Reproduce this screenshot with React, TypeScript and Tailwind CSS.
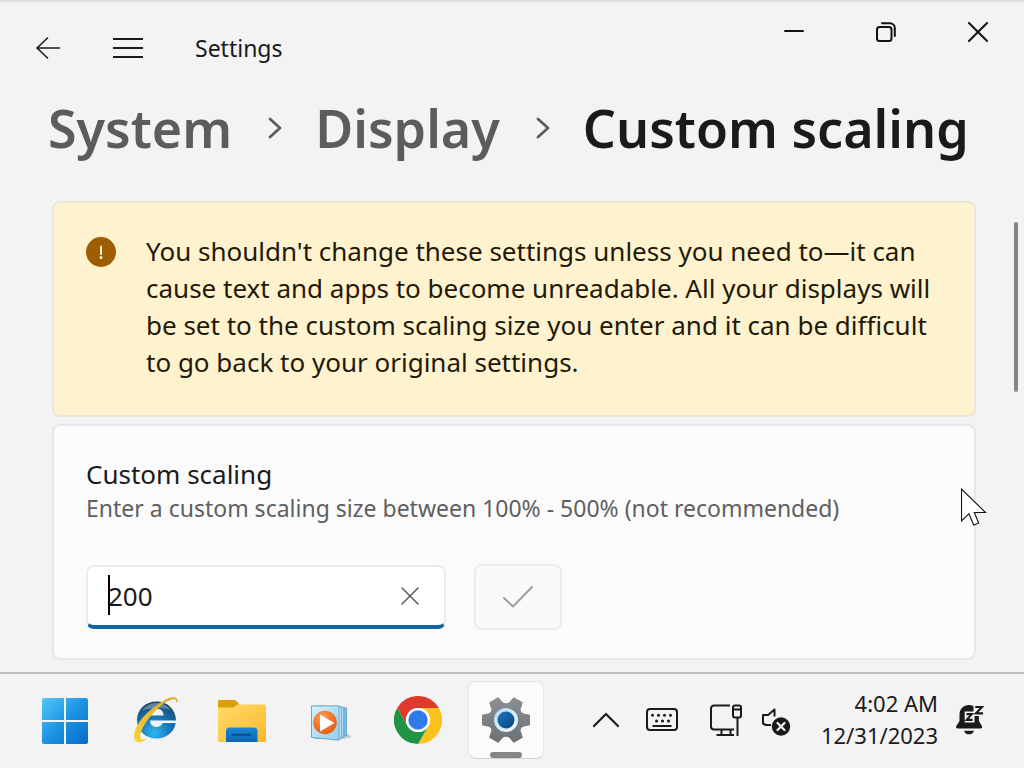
import React, { useState } from "react";

const crumbs = [
  { name: "System", path: "#system" },
  { name: "Display", path: "#display" },
];

const BackIcon = () => (
  <svg width="26" height="24" viewBox="0 0 26 24" fill="none" stroke="#1b1b1b" strokeWidth="1.6" strokeLinecap="round" strokeLinejoin="round">
    <path d="M12.5 2 2 12l10.5 10M2.5 12h22" />
  </svg>
);

const MenuIcon = () => (
  <svg width="30" height="22" viewBox="0 0 30 22" stroke="#1b1b1b" strokeWidth="2">
    <path d="M0 2h30M0 11h30M0 20h30" />
  </svg>
);

const MinimizeIcon = () => (
  <svg width="20" height="20" viewBox="0 0 20 20" stroke="#111" strokeWidth="2" strokeLinecap="round">
    <path d="M1 9h18" />
  </svg>
);

const RestoreIcon = () => (
  <svg width="20" height="20" viewBox="0 0 20 20" fill="none" stroke="#111" strokeWidth="2" strokeLinecap="round">
    <rect x="1" y="5" width="14.5" height="14" rx="2.5" />
    <path d="M6 1.200h8a4.800 4.800 0 0 1 4.800 4.800v8" />
  </svg>
);

const CloseIcon = () => (
  <svg width="20" height="20" viewBox="0 0 20 20" stroke="#111" strokeWidth="2" strokeLinecap="round">
    <path d="m1 1 18 18M19 1 1 19" />
  </svg>
);

const CrumbIcon = () => (
  <svg width="14" height="22" viewBox="0 0 14 22" fill="none" stroke="#5c5c5c" strokeWidth="2.8" strokeLinecap="round" strokeLinejoin="round">
    <path d="m2 2 10 9L2 20" />
  </svg>
);

const WarningIcon = () => (
  <svg width="30" height="30" viewBox="0 0 30 30" className="shrink-0">
    <circle cx="15" cy="15" r="15" fill="#9d5d00" />
    <path d="M15 9.5v7.5" stroke="#fff4ce" strokeWidth="2" strokeLinecap="round" />
    <circle cx="15" cy="20.6" r="1.5" fill="#fff4ce" />
  </svg>
);

const StartIcon = () => (
  <svg width="48" height="48" viewBox="0 0 48 48">
    <defs>
      <linearGradient id="start" x1="0" y1="0" x2="1" y2="1" gradientUnits="objectBoundingBox">
        <stop offset="0" stopColor="#52c8fb" />
        <stop offset="0.5" stopColor="#1c93e2" />
        <stop offset="1" stopColor="#066bcb" />
      </linearGradient>
    </defs>
    <path
      fill="url(#start)"
      d="M2 1h20v22H0V3a2 2 0 0 1 2-2zM24 1h20a2 2 0 0 1 2 2v20H24zM0 25h22v22H2a2 2 0 0 1-2-2zM24 25h22v20a2 2 0 0 1-2 2H24z"
      transform="translate(0 1)"
    />
  </svg>
);

const ExplorerBrowserIcon = () => (
  <svg width="48" height="48" viewBox="0 0 48 48">
    <defs>
      <radialGradient id="ie" cx="0.45" cy="0.85" r="0.85">
        <stop offset="0" stopColor="#2fb4f2" />
        <stop offset="0.5" stopColor="#1577b8" />
        <stop offset="1" stopColor="#1b4468" />
      </radialGradient>
      <linearGradient id="ring" x1="1" y1="0" x2="0" y2="1">
        <stop offset="0" stopColor="#d9a92c" />
        <stop offset="0.5" stopColor="#e8b92e" />
        <stop offset="1" stopColor="#f6d33c" />
      </linearGradient>
    </defs>
    <path
      fill="url(#ie)"
      fillRule="evenodd"
      d="M26.500 5.500c11 0 19.500 8 19.500 19H20c.3 4.200 2.800 6.500 6.300 6.500 3.200 0 5.200-1.500 6.200-4h13.200C44 36.500 36.500 42.500 26.500 42.500 15.500 42.500 7 34.500 7 24S15.500 5.500 26.500 5.500zM19.500 19.500h14.200c-.3-4.300-2.800-6.800-6.700-6.800s-6.700 2.500-7.500 6.800z"
    />
    <path d="M12 14.500c4-5 9-7.500 14.500-7.500 6 0 11 2.500 14 7-6-2.500-17-3-28.500.5z" fill="#fff" opacity="0.3" />
    <path
      fill="url(#ring)"
      d="M47.500 6C48.500 1 42.500-.5 35 4 22 10.500 9 23 5 34.500c-2.500 8 0 13 6 11.500 2.500-.7 4.500-2 6-3.500-5 2.300-7.500 1-6.500-4.500C12.500 29 24 14 35 6.500c7-4.200 12-4.500 11-.5z"
    />
  </svg>
);

const FolderIcon = () => (
  <svg width="48" height="48" viewBox="0 0 48 48">
    <defs>
      <linearGradient id="folder" x1="0" y1="0" x2="1" y2="1">
        <stop offset="0" stopColor="#ffdb6a" />
        <stop offset="1" stopColor="#fbb92c" />
      </linearGradient>
      <linearGradient id="tray" x1="0" y1="0" x2="0" y2="1">
        <stop offset="0" stopColor="#1788d8" />
        <stop offset="1" stopColor="#0f66ad" />
      </linearGradient>
    </defs>
    <path d="M1.500 4H16c1 0 1.600.3 2.200.9L22 9l-5 7H0V5.500C0 4.600.6 4 1.500 4z" fill="#d89e0c" />
    <path d="M0 11.500h14c1.200 0 2-.3 2.800-1l1-.9c.8-.8 1.800-1.100 3-1.100h25.700c.9 0 1.500.6 1.500 1.500v34.500c0 .9-.6 1.500-1.500 1.500h-45C.6 46 0 45.400 0 44.500z" fill="url(#folder)" />
    <path d="M8 46V35a3.500 3.500 0 0 1 3.500-3.500h24.500a3.500 3.500 0 0 1 3.500 3.500v11z" fill="url(#tray)" />
    <path d="M14.500 38.800h18" stroke="#0b4c87" strokeWidth="2" strokeLinecap="round" />
  </svg>
);

const MediaPlayerIcon = () => (
  <svg width="48" height="48" viewBox="0 0 48 48">
    <defs>
      <radialGradient id="disc" cx="0.4" cy="0.3" r="0.8">
        <stop offset="0" stopColor="#f9a258" />
        <stop offset="0.6" stopColor="#ee6f22" />
        <stop offset="1" stopColor="#dd5a12" />
      </radialGradient>
      <linearGradient id="sheet" x1="0" y1="0" x2="1" y2="1">
        <stop offset="0" stopColor="#d8f1fc" />
        <stop offset="1" stopColor="#93cdec" />
      </linearGradient>
    </defs>
    <path d="M30 44.500 45.500 41 42 38z" fill="#b5cbd8" />
    <path d="m12 11 28.500 1v27.500L12 42z" fill="#7fbfe4" stroke="#4f94bd" strokeWidth="0.7" />
    <path d="m10 10.500 27.800.8v30L10 42z" fill="#a9dbf3" stroke="#4f94bd" strokeWidth="0.7" />
    <path d="m8 10 27.300.6v32L8 42z" fill="#c5e8f8" stroke="#4f94bd" strokeWidth="0.7" />
    <path d="m5.500 10 27.500-.2v34.400L5.500 41.500z" fill="url(#sheet)" stroke="#5ba0c8" strokeWidth="0.9" />
    <circle cx="19" cy="26.500" r="11.800" fill="url(#disc)" />
    <path d="M14 18.500v17L28.300 27z" fill="#fff" />
  </svg>
);

const ChromeIcon = () => (
  <svg width="48" height="48" viewBox="0 0 48 48">
    <path d="M3.200 12A24 24 0 0 1 44.800 12H24A12 12 0 0 0 13.600 30z" fill="#df3a2e" />
    <path d="M44.800 12A24 24 0 0 1 24 48L34.400 30A12 12 0 0 0 24 12z" fill="#fcc31e" />
    <path d="M24 48A24 24 0 0 1 3.200 12L13.600 30A12 12 0 0 0 34.400 30z" fill="#219347" />
    <circle cx="24" cy="24" r="12" fill="#fff" />
    <circle cx="24" cy="24" r="9.700" fill="#2f79ea" />
  </svg>
);

const GearIcon = () => (
  <svg width="48" height="48" viewBox="0 0 48 48">
    <defs>
      <linearGradient id="gear" x1="0" y1="0" x2="0" y2="48" gradientUnits="userSpaceOnUse">
        <stop offset="0" stopColor="#8b9094" />
        <stop offset="1" stopColor="#6b7074" />
      </linearGradient>
      <linearGradient id="hub" x1="0" y1="0" x2="1" y2="1">
        <stop offset="0" stopColor="#1a76c2" />
        <stop offset="1" stopColor="#0b4379" />
      </linearGradient>
      <linearGradient id="rim" x1="0" y1="0" x2="1" y2="1">
        <stop offset="0" stopColor="#b9d9ee" />
        <stop offset="1" stopColor="#f2f9fe" />
      </linearGradient>
    </defs>
    <path
      fill="url(#gear)"
      stroke="url(#gear)"
      strokeWidth="2"
      strokeLinejoin="round"
      d="M47 19.500v9l-5.500 1c-3 .8-4.500 3.500-3.600 6.300l1.800 5.300-7.800 4.500-3.700-4.200c-2.300-2.200-6.100-2.200-8.400 0l-3.700 4.200-7.800-4.500 1.800-5.300c.9-2.800-.6-5.500-3.600-6.300l-5.500-1v-9l5.500-1c3-.8 4.500-3.500 3.600-6.300L8.300 6.900l7.800-4.500 3.700 4.200c2.300 2.200 6.100 2.200 8.400 0l3.700-4.200 7.800 4.500-1.800 5.300c-.9 2.800.6 5.500 3.600 6.300z"
    />
    <circle cx="24" cy="24" r="12" fill="url(#rim)" />
    <circle cx="24" cy="24" r="8.500" fill="url(#hub)" />
  </svg>
);

const ChevronUpIcon = () => (
  <svg width="28" height="16" viewBox="0 0 28 16" fill="none" stroke="#1a1a1a" strokeWidth="2.200" strokeLinecap="round" strokeLinejoin="round">
    <path d="m2 14 12-12 12 12" />
  </svg>
);

const KeyboardIcon = () => (
  <svg width="32" height="24" viewBox="0 0 32 24" fill="none" stroke="#1a1a1a">
    <rect x="1" y="1" width="30" height="21" rx="3" strokeWidth="2" />
    <path d="M6.500 7.300h.01M12.500 7.300h.01M18.500 7.300h.01M24.500 7.300h.01M10.500 13h.01M16.500 13h.01M22.500 13h.01" strokeWidth="3" strokeLinecap="round" />
    <path d="M6.500 18h19" strokeWidth="2" />
  </svg>
);

const NetworkIcon = () => (
  <svg width="32" height="32" viewBox="0 0 32 32" fill="none" stroke="#1a1a1a" strokeWidth="2">
    <path d="M20 1.500H4a3 3 0 0 0-3 3v18a3 3 0 0 0 3 3h20M11.500 25.500V31M20.500 25.500V31M6.500 31h17.500M27.500 14v18" />
    <rect x="23" y="1.500" width="8" height="12" rx="2" />
    <path d="M23 5.500h8" />
  </svg>
);

const VolumeMutedIcon = () => (
  <svg width="29" height="32" viewBox="0 0 29 32" fill="none" stroke="#1a1a1a" strokeWidth="2" strokeLinejoin="round">
    <path d="M9 21H4l-3-1.500V11h5l6.500-5.500v7" />
    <circle cx="19" cy="22.500" r="9.200" fill="#1a1a1a" stroke="none" />
    <path d="m15.500 19 7 7M22.500 19l-7 7" stroke="#f3f3f3" strokeWidth="2.200" strokeLinecap="round" />
  </svg>
);

const SnoozeIcon = () => (
  <svg width="28" height="32" viewBox="0 0 28 32">
    <path d="M13 1C7.500 1 3.500 5 3.500 10.500V17L.3 22c-.7 1.300 0 2.400 1.400 2.400h22.800c1.400 0 2.100-1.100 1.400-2.400l-3-5v-6.500C22.900 5 18.500 1 13 1z" fill="#1a1a1a" />
    <path d="M8 26.700h10c-.7 2.500-2.600 3.600-5 3.600s-4.300-1.100-5-3.600z" fill="#1a1a1a" />
    <path d="M17.500 0H28v12h-9.500v6.500H8.700V7.500h8.800z" fill="#f3f3f3" />
    <path d="M19.300 3h6.700L20 9.300h7" fill="none" stroke="#1a1a1a" strokeWidth="2.200" />
    <path d="M10.500 10.200h5.200l-4.900 5.600h5.700" fill="none" stroke="#1a1a1a" strokeWidth="2.200" />
  </svg>
);

const PointerIcon = () => (
  <svg width="26" height="38" viewBox="0 0 26 38">
    <path d="M.5 1v32l7.500-7.300 4.700 11.300 5-2-4.400-10.500h11.200z" fill="#fff" stroke="#111" strokeWidth="1.100" />
  </svg>
);

const pinnedApps = [
  { name: "Start", icon: StartIcon },
  { name: "Internet Explorer", icon: ExplorerBrowserIcon },
  { name: "File Explorer", icon: FolderIcon },
  { name: "Media Player", icon: MediaPlayerIcon },
  { name: "Google Chrome", icon: ChromeIcon },
  { name: "Settings", icon: GearIcon, active: true },
];

const windowControls = [
  { name: "Minimize", icon: MinimizeIcon },
  { name: "Restore", icon: RestoreIcon },
  { name: "Close", icon: CloseIcon },
];

const TitleBar: React.FC = () => (
  <header className="flex items-start justify-between">
    <div className="flex items-center pt-[30px] pl-[35px]">
      <button aria-label="Back" className="flex h-8 w-[78px] items-center">
        <BackIcon />
      </button>
      <button aria-label="Open navigation" className="flex h-8 w-[82px] items-center">
        <MenuIcon />
      </button>
      <span className="text-[23px] leading-8">Settings</span>
    </div>
    <div className="flex">
      {windowControls.map(({ name, icon: Icon }) => (
        <button key={name} aria-label={name} className="flex h-[60px] w-[92px] items-center justify-center">
          <Icon />
        </button>
      ))}
    </div>
  </header>
);

const Breadcrumb: React.FC = () => (
  <nav aria-label="Breadcrumb" className="pt-6 pl-12">
    <ol className="flex items-center text-[52px] leading-[80px] font-semibold whitespace-nowrap">
      {crumbs.map((crumb) => (
        <li key={crumb.name} className="flex items-center">
          <a href={crumb.path} className="text-[#5c5c5c]">
            {crumb.name}
          </a>
          <span className="pr-[33px] pl-9">
            <CrumbIcon />
          </span>
        </li>
      ))}
      <li>
        <h1 className="text-[#1a1a1a]">Custom scaling</h1>
      </li>
    </ol>
  </nav>
);

const ScalingCard: React.FC = () => {
  const [value, setValue] = useState("200");

  return (
    <section className="rounded-lg border-2 border-[#e7e7e7] bg-[#fbfbfb] px-8 pt-[30px] pb-7">
      <label htmlFor="scaling" className="block text-[26px] leading-9">
        Custom scaling
      </label>
      <p className="text-[23px] leading-8 text-[#5f5f5f]">
        Enter a custom scaling size between 100% - 500% (not recommended)
      </p>
      <div className="flex items-center gap-7 pt-10">
        <div className="relative flex h-16 w-[360px] items-center overflow-hidden rounded-lg border-2 border-[#ececec] border-b-4 border-b-[#0f67a8] bg-white">
          <input
            id="scaling"
            type="text"
            value={value}
            onChange={(e) => setValue(e.target.value)}
            className="h-full min-w-0 flex-1 bg-transparent pl-5 text-[26px] caret-transparent outline-none"
          />
          <span className="absolute top-2 left-5 h-10 w-0.5 bg-black" />
          <button aria-label="Clear" onClick={() => setValue("")} className="flex h-full w-[68px] items-center justify-center">
            <svg width="18" height="18" viewBox="0 0 18 18" stroke="#5a5a5a" strokeWidth="1.500" strokeLinecap="round">
              <path d="m1 1 16 16M17 1 1 17" />
            </svg>
          </button>
        </div>
        <button aria-label="Apply" className="flex h-[66px] w-[88px] items-center justify-center rounded-lg border-2 border-[#ececec] bg-[#fafafa]">
          <svg width="30" height="24" viewBox="0 0 30 24" fill="none" stroke="#9d9d9d" strokeWidth="2" strokeLinecap="round" strokeLinejoin="round">
            <path d="m1 13 9 8.500L29 2" />
          </svg>
        </button>
      </div>
    </section>
  );
};

const Taskbar: React.FC = () => (
  <footer className="flex h-24 items-center justify-between border-t-2 border-[#bfbfbf] bg-[#f3f3f3] pr-10 pb-0.5 pl-7">
    <div className="flex gap-3">
      {pinnedApps.map(({ name, icon: Icon, active }) => (
        <button
          key={name}
          aria-label={name}
          className={`relative flex h-[78px] w-[76px] items-center justify-center rounded-lg border ${
            active ? "border-[#e6e6e6] border-b-[#d2d2d2] bg-[#fbfbfb]" : "border-transparent"
          }`}
        >
          <Icon />
          {active && <span className="absolute bottom-0 left-[21px] h-1.5 w-8 rounded-full bg-[#868686]" />}
        </button>
      ))}
    </div>
    <div className="flex items-center">
      <button aria-label="Show hidden icons" className="mr-[26px]">
        <ChevronUpIcon />
      </button>
      <button aria-label="Touch keyboard" className="mr-8">
        <KeyboardIcon />
      </button>
      <button aria-label="Network and volume" className="mr-[30px] flex items-center gap-5">
        <NetworkIcon />
        <VolumeMutedIcon />
      </button>
      <button className="mr-[18px] pb-0.5 text-right text-[22px] leading-8">
        <time className="block">4:02 AM</time>
        <time className="block">12/31/2023</time>
      </button>
      <button aria-label="Notifications snoozed">
        <SnoozeIcon />
      </button>
    </div>
  </footer>
);

const App: React.FC = () => {
  return (
    <div className="relative flex min-h-screen flex-col overflow-hidden border-t-2 border-[#dedede] bg-[#f3f3f3] font-['Noto_Sans',sans-serif] text-[#1a1a1a]">
      <TitleBar />
      <Breadcrumb />
      <main className="flex flex-1 flex-col gap-[7px] pt-[33px] pr-12 pb-3 pl-[52px]">
        <div role="alert" className="flex gap-[30px] rounded-lg border-2 border-[#ece6d6] bg-[#fff2cf] px-8 pt-[30px] pb-[34px]">
          <span className="pt-1">
            <WarningIcon />
          </span>
          <p className="text-[26px] leading-[37px] text-[#1f1a08]">
            You shouldn't change these settings unless you need to—it can cause text and apps to become unreadable. All your displays will be set to the custom scaling size you enter and it can be difficult to go back to your original settings.
          </p>
        </div>
        <ScalingCard />
      </main>
      <Taskbar />
      <div className="absolute top-[220px] right-1.5 h-[170px] w-1 rounded-full bg-[#858585]" />
      <div className="pointer-events-none absolute top-[486px] left-[961px]">
        <PointerIcon />
      </div>
    </div>
  );
};

export default App;
